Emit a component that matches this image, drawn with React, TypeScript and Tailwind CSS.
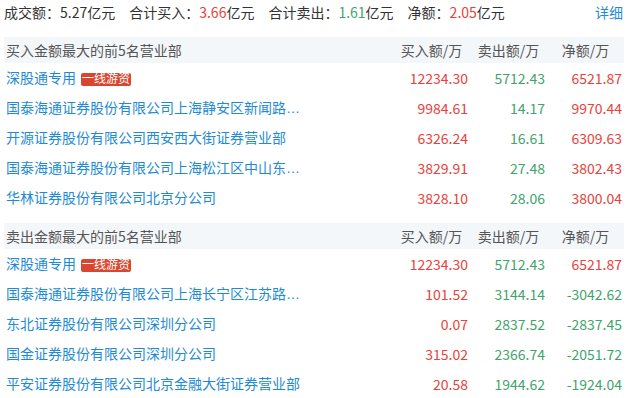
import React from 'react';

interface Row {
  name: string;
  tag?: string;
  buy: string;
  sell: string;
  net: string;
}

const buyRows: Row[] = [
  { name: '深股通专用', tag: '一线游资', buy: '12234.30', sell: '5712.43', net: '6521.87' },
  { name: '国泰海通证券股份有限公司上海静安区新闻路证券营业部', buy: '9984.61', sell: '14.17', net: '9970.44' },
  { name: '开源证券股份有限公司西安西大街证券营业部', buy: '6326.24', sell: '16.61', net: '6309.63' },
  { name: '国泰海通证券股份有限公司上海松江区中山东路证券营业部', buy: '3829.91', sell: '27.48', net: '3802.43' },
  { name: '华林证券股份有限公司北京分公司', buy: '3828.10', sell: '28.06', net: '3800.04' },
];

const sellRows: Row[] = [
  { name: '深股通专用', tag: '一线游资', buy: '12234.30', sell: '5712.43', net: '6521.87' },
  { name: '国泰海通证券股份有限公司上海长宁区江苏路证券营业部', buy: '101.52', sell: '3144.14', net: '-3042.62' },
  { name: '东北证券股份有限公司深圳分公司', buy: '0.07', sell: '2837.52', net: '-2837.45' },
  { name: '国金证券股份有限公司深圳分公司', buy: '315.02', sell: '2366.74', net: '-2051.72' },
  { name: '平安证券股份有限公司北京金融大街证券营业部', buy: '20.58', sell: '1944.62', net: '-1924.04' },
];

const RED = 'text-[#e8423b]';
const GREEN = 'text-[#3fa46c]';

const Section: React.FC<{ title: string; rows: Row[] }> = ({ title, rows }) => (
  <div className="mx-[4px]">
    <div className="flex items-center h-[26px] bg-[#f4f7fa] text-[#555]">
      <div className="flex-1 pl-[2px]">{title}</div>
      <div className="w-[77px] pl-[4px] text-center">买入额/万</div>
      <div className="w-[77px] pl-[4px] text-center">卖出额/万</div>
      <div className="w-[77px] pl-[4px] text-center mr-[2px]">净额/万</div>
    </div>
    {rows.map((r, i) => (
      <div key={i} className="flex items-center h-[30px]">
        <div className="flex-1 min-w-0 pl-[2px]">
          {/* latin font first so the ellipsis sits on the baseline */}
          <div className="w-[298px] truncate text-[#1f8bd2] font-['Liberation_Sans','Noto_Sans_CJK_SC',sans-serif]">
            {r.name}
            {r.tag && (
              <span className="inline-block ml-[5px] px-[1px] bg-[#d9462f] text-white text-[12px] leading-[13px] rounded-[2px]">
                {r.tag}
              </span>
            )}
          </div>
        </div>
        <div className={`w-[77px] text-right ${RED}`}>{r.buy}</div>
        <div className={`w-[77px] text-right ${GREEN}`}>{r.sell}</div>
        <div className={`w-[77px] text-right mr-[2px] ${r.net.startsWith('-') ? GREEN : RED}`}>{r.net}</div>
      </div>
    ))}
  </div>
);

const App: React.FC = () => {
  return (
    <div className="w-[628px] h-[398px] overflow-hidden bg-white text-[14px] font-['Noto_Sans_CJK_SC',sans-serif]">
      <div className="flex items-center h-[25px] pl-[4px] pr-[5px] gap-[14px] text-[#333]">
        <span>成交额：5.27亿元</span>
        <span>
          合计买入：<span className={RED}>3.66</span>亿元
        </span>
        <span>
          合计卖出：<span className={GREEN}>1.61</span>亿元
        </span>
        <span>
          净额：<span className={RED}>2.05</span>亿元
        </span>
        <a className="ml-auto text-[#1f8bd2]">详细</a>
      </div>
      <div className="mt-[12px]">
        <Section title="买入金额最大的前5名营业部" rows={buyRows} />
      </div>
      <div className="mt-[10px]">
        <Section title="卖出金额最大的前5名营业部" rows={sellRows} />
      </div>
    </div>
  );
};

export default App;
